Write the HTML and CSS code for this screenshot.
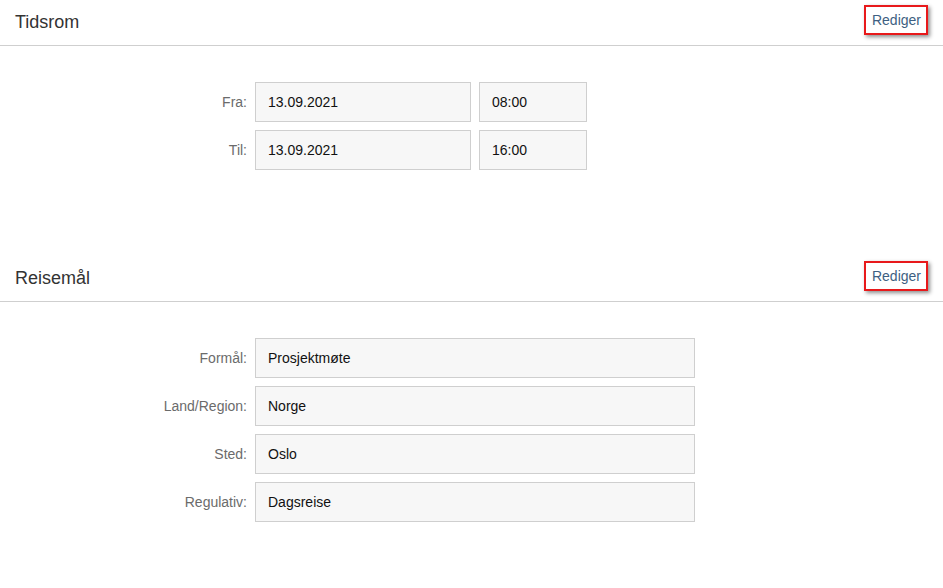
FILE: index.html
```html
<!DOCTYPE html>
<html lang="no">
<head>
<meta charset="utf-8">
<title>Reise</title>
<link rel="stylesheet" href="styles.css">
</head>
<body>
<section class="panel">
  <header class="panel-head">
    <h2 class="panel-title">Tidsrom</h2>
    <a class="edit-link" href="#">Rediger</a>
  </header>
  <div class="panel-body">
    <div class="form-grid time-grid">
      <span class="label">Fra:</span>
      <div class="field">13.09.2021</div>
      <div class="field">08:00</div>
      <span class="label">Til:</span>
      <div class="field">13.09.2021</div>
      <div class="field">16:00</div>
    </div>
  </div>
</section>
<section class="panel">
  <header class="panel-head">
    <h2 class="panel-title">Reisemål</h2>
    <a class="edit-link" href="#">Rediger</a>
  </header>
  <div class="panel-body">
    <div class="form-grid place-grid">
      <span class="label">Formål:</span>
      <div class="field">Prosjektmøte</div>
      <span class="label">Land/Region:</span>
      <div class="field">Norge</div>
      <span class="label">Sted:</span>
      <div class="field">Oslo</div>
      <span class="label">Regulativ:</span>
      <div class="field">Dagsreise</div>
    </div>
  </div>
</section>
</body>
</html>
```

FILE: styles.css
```css
* { box-sizing: border-box; }
html, body {
  margin: 0;
  padding: 0;
  background: #fff;
  font-family: "Liberation Sans", Arial, sans-serif;
  font-size: 14px;
  color: #222;
}
.panel-head {
  display: flex;
  align-items: center;
  justify-content: space-between;
  height: 46px;
  padding: 0 15px 0 15px;
  border-bottom: 1px solid #cfcfcf;
}
.panel-title {
  margin: 0 0 2px 0;
  font-size: 18px;
  font-weight: normal;
  color: #333;
  line-height: 20px;
}
.edit-link {
  display: block;
  padding: 6px 5px 5px 6px;
  line-height: 15px;
  border: 2px solid #e8191b;
  color: #3e5f82;
  text-decoration: none;
  box-shadow: 2px 2px 4px rgba(0, 0, 0, 0.45);
  margin-bottom: 6px;
}
.panel-body {
  padding: 36px 0 86px 0;
}
.form-grid {
  display: grid;
  column-gap: 8px;
  row-gap: 8px;
  align-items: center;
}
.time-grid { grid-template-columns: 247px 216px 108px; }
.place-grid { grid-template-columns: 247px 440px; }
.label {
  text-align: right;
  color: #6b6b6b;
}
.field {
  height: 40px;
  display: flex;
  align-items: center;
  padding-left: 12px;
  background: #f7f7f7;
  border: 1px solid #cfcfcf;
  color: #111;
}
```
